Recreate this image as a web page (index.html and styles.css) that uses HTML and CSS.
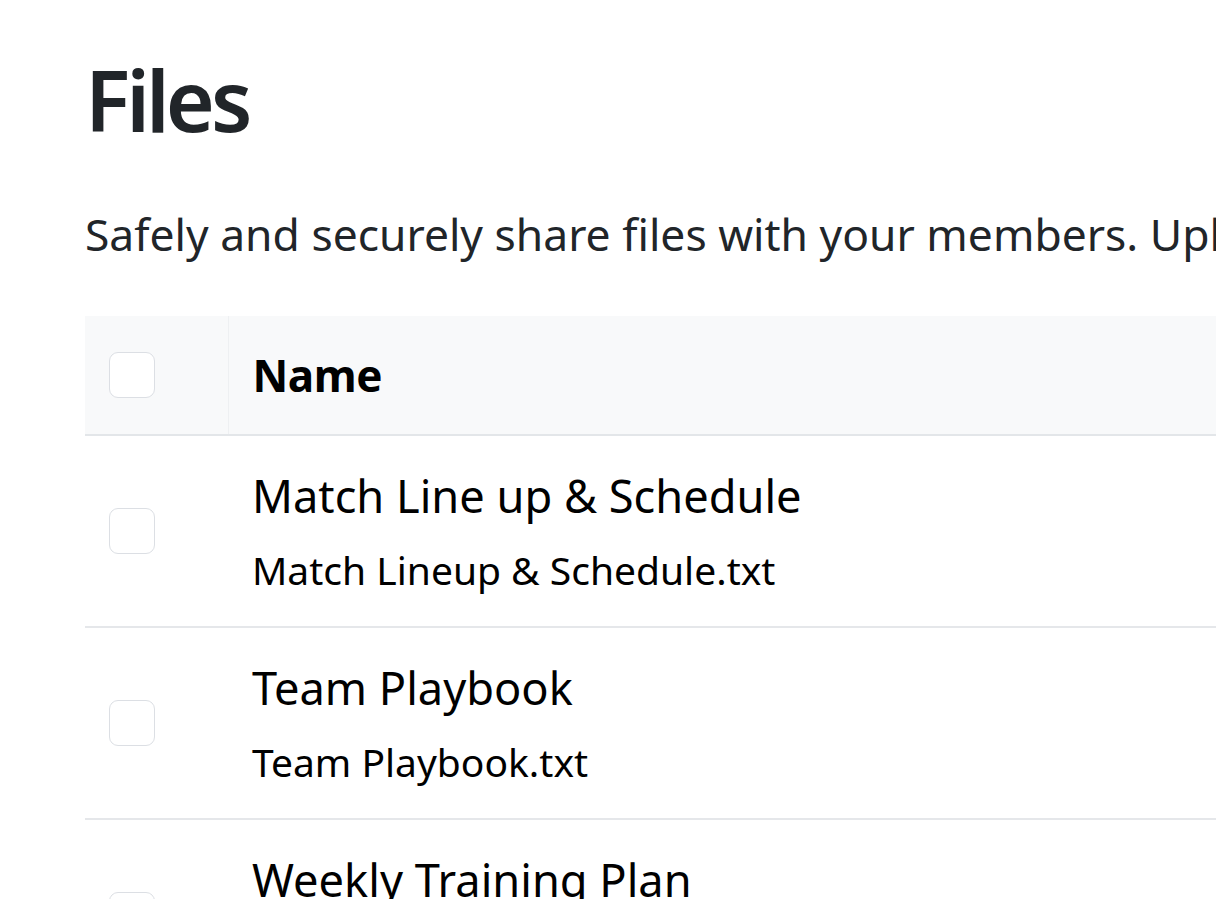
FILE: index.html
```html
<!DOCTYPE html>
<html lang="en">
<head>
<meta charset="utf-8">
<title>Files</title>
<link rel="stylesheet" href="styles.css">
</head>
<body>
<div class="viewport">
  <main class="page">
    <h1 class="title">Files</h1>
    <p class="lead">Safely and securely share files with your members. Upload documents, playbooks and schedules for everyone to access.</p>
    <table class="files">
      <thead>
        <tr>
          <th class="col-check"><span class="checkbox"></span></th>
          <th class="col-name">Name</th>
        </tr>
      </thead>
      <tbody>
        <tr>
          <td class="col-check"><span class="checkbox"></span></td>
          <td class="col-name">
            <div class="file-title">Match Line up &amp; Schedule</div>
            <div class="file-name">Match Lineup &amp; Schedule.txt</div>
          </td>
        </tr>
        <tr>
          <td class="col-check"><span class="checkbox"></span></td>
          <td class="col-name">
            <div class="file-title">Team Playbook</div>
            <div class="file-name">Team Playbook.txt</div>
          </td>
        </tr>
        <tr>
          <td class="col-check"><span class="checkbox"></span></td>
          <td class="col-name">
            <div class="file-title">Weekly Training Plan</div>
            <div class="file-name">Weekly Training Plan.txt</div>
          </td>
        </tr>
      </tbody>
    </table>
  </main>
</div>
</body>
</html>
```
FILE: styles.css
```css
html, body {
  margin: 0;
  padding: 0;
  background: #ffffff;
}

.viewport {
  width: 1216px;
  height: 899px;
  overflow: hidden;
  background: #ffffff;
}

.page {
  width: 2000px;
  padding: 50px 0 0 85px;
  font-family: "Noto Sans", "Open Sans", sans-serif;
  color: #212529;
}

.title {
  margin: 0;
  font-size: 84px;
  font-weight: 600;
  line-height: 1.2;
  letter-spacing: -4px;
  color: #212529;
}

.lead {
  margin: 50px 0 0 0;
  font-size: 44.4px;
  line-height: 1.52;
  white-space: nowrap;
}

.files {
  margin-top: 48px;
  width: 1131px;
  border-collapse: collapse;
  color: #000;
}

.files thead tr {
  background: #f8f9fa;
  border-bottom: 2px solid #e3e6e9;
}

.files tbody tr {
  border-bottom: 2px solid #e5e7ea;
}

.files th,
.files td {
  padding: 0;
  text-align: left;
  vertical-align: middle;
}

.col-check {
  width: 143px;
  padding-left: 24px !important;
  box-sizing: border-box;
}

thead .col-check {
  border-right: 1px solid #eef0f2;
}

.files th {
  height: 118px;
}

.col-name {
  padding-left: 24px !important;
}

.files th.col-name {
  font-size: 44px;
  font-weight: 700;
  letter-spacing: -0.4px;
}

.files td {
  height: 190px;
}

.checkbox {
  display: block;
  width: 44px;
  height: 44px;
  border: 1.5px solid #dcdfe4;
  border-radius: 9px;
  background: #ffffff;
}

.file-title {
  font-size: 45.2px;
  line-height: 1.3;
}

.file-name {
  margin-top: 20px;
  font-size: 39px;
  line-height: 1.3;
}
```
